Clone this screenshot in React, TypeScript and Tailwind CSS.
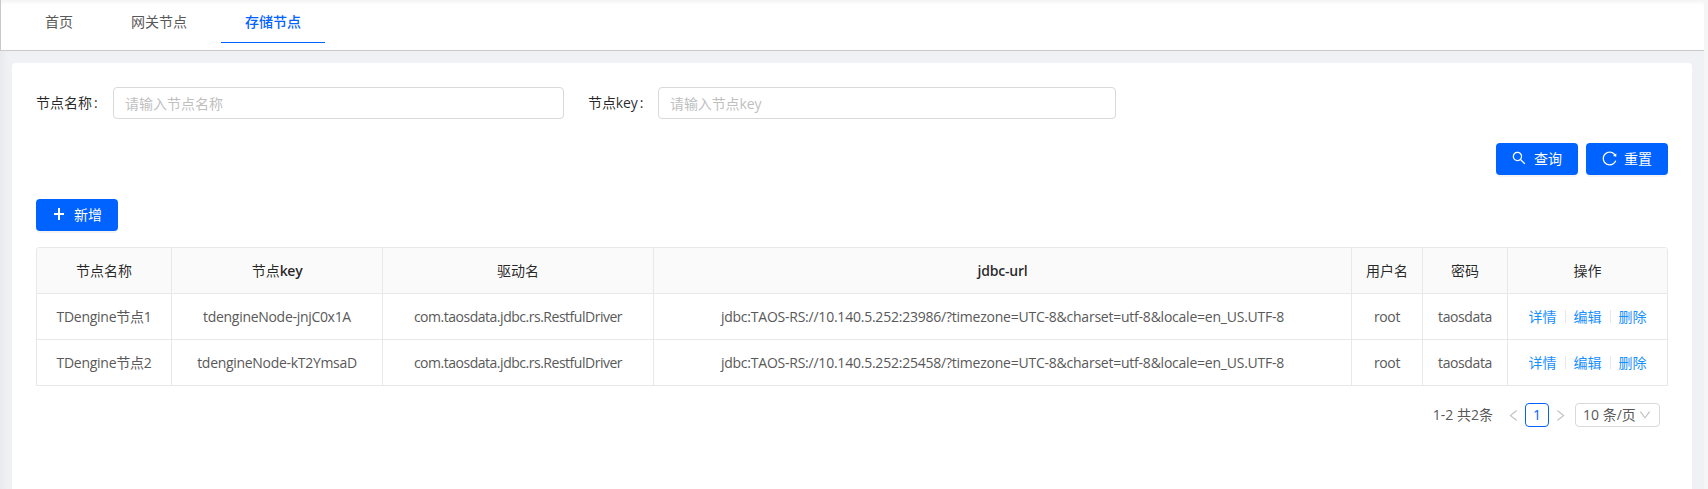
import type { ReactNode } from "react";
import {
  AiOutlineDown,
  AiOutlineLeft,
  AiOutlineReload,
  AiOutlineRight,
  AiOutlineSearch,
} from "react-icons/ai";

const tabs = ["首页", "网关节点", "存储节点"];
const activeTab = "存储节点";

const rows = [
  {
    name: "TDengine节点1",
    key: "tdengineNode-jnjC0x1A",
    driver: "com.taosdata.jdbc.rs.RestfulDriver",
    url: "jdbc:TAOS-RS://10.140.5.252:23986/?timezone=UTC-8&charset=utf-8&locale=en_US.UTF-8",
    user: "root",
    password: "taosdata",
  },
  {
    name: "TDengine节点2",
    key: "tdengineNode-kT2YmsaD",
    driver: "com.taosdata.jdbc.rs.RestfulDriver",
    url: "jdbc:TAOS-RS://10.140.5.252:25458/?timezone=UTC-8&charset=utf-8&locale=en_US.UTF-8",
    user: "root",
    password: "taosdata",
  },
];

function PlusIcon() {
  return (
    <svg width="14" height="14" viewBox="0 0 14 14" fill="currentColor" shapeRendering="crispEdges">
      <path d="M6 1h2v12H6z" />
      <path d="M2 6h10v2H2z" />
    </svg>
  );
}

function PrimaryButton({ icon, children }: { icon: ReactNode; children: ReactNode }) {
  return (
    <button className="flex h-8 w-[82px] items-center gap-[7px] rounded bg-[#0062ff] pl-[15px] text-white shadow-[0_2px_0_rgba(0,0,0,0.045)]">
      <span className="flex h-4 w-4 -translate-y-px items-center justify-center">{icon}</span>
      <span>{children}</span>
    </button>
  );
}

function Th({ children }: { children: ReactNode }) {
  return (
    <th className="border-r border-b border-[#e8e8e8] p-0 text-center font-normal text-black/85">{children}</th>
  );
}

function Td({ className = "", children }: { className?: string; children: ReactNode }) {
  return <td className={`border-r border-b border-[#e8e8e8] p-0 text-center ${className}`}>{children}</td>;
}

function Actions() {
  return (
    <div className="flex items-center justify-center text-[#1890ff]">
      <a>详情</a>
      <span className="mx-2 h-[13px] w-px bg-[#e8e8e8]" />
      <a>编辑</a>
      <span className="mx-2 h-[13px] w-px bg-[#e8e8e8]" />
      <a>删除</a>
    </div>
  );
}

export default function App() {
  return (
    <div className="flex h-[489px] w-[1708px] overflow-hidden bg-[#f5f5f5] font-['Open_Sans','Noto_Sans_CJK_SC',sans-serif] text-sm leading-[22px] text-[#595959]">
      <div className="flex w-[1704px] flex-col bg-[#f0f1f5]">
        <nav className="flex h-[51px] shrink-0 gap-[10px] border-b border-l border-[#c9c9c9] bg-white pl-5 shadow-[inset_0_4px_4px_-2px_rgba(0,21,41,0.06)]">
          {tabs.map((tab) => (
            <a
              key={tab}
              className={
                tab === activeTab
                  ? "h-[43px] border-b border-[#0062ff] px-6 pt-[11px] font-medium text-[#0062ff]"
                  : "h-[43px] px-6 pt-[11px]"
              }
            >
              {tab}
            </a>
          ))}
        </nav>
        <div className="flex grow bg-linear-to-r from-[#e8eaee] to-[#f0f1f5] to-[8px] pt-3 pr-3 pl-3">
          <main className="flex w-[1680px] flex-col rounded-t-sm bg-white px-6 pt-6">
            <div className="flex h-8 items-center text-black/85">
              <label className="w-[77px]">
                节点名称<span className="ml-0.5">:</span>
              </label>
              <input
                className="h-8 w-[451px] rounded border border-[#d9d9d9] px-[11px] placeholder:text-[#bfbfbf]"
                placeholder="请输入节点名称"
              />
              <label className="ml-6 w-[70px] tracking-[-0.1px]">
                节点key<span className="ml-0.5">:</span>
              </label>
              <input
                className="h-8 w-[458px] rounded border border-[#d9d9d9] px-[11px] tracking-[-0.1px] placeholder:text-[#bfbfbf]"
                placeholder="请输入节点key"
              />
            </div>
            <div className="mt-6 flex justify-end gap-2">
              <PrimaryButton icon={<AiOutlineSearch size={16} className="shrink-0" />}>查询</PrimaryButton>
              <PrimaryButton icon={<AiOutlineReload size={17} className="shrink-0" />}>重置</PrimaryButton>
            </div>
            <div className="mt-6">
              <PrimaryButton icon={<PlusIcon />}>新增</PrimaryButton>
            </div>
            <table className="mt-4 w-[1632px] table-fixed border-separate border-spacing-0 overflow-hidden rounded-t border-t border-l border-[#e8e8e8]">
              <colgroup>
                <col className="w-[135px]" />
                <col className="w-[211px]" />
                <col className="w-[271px]" />
                <col className="w-[698px]" />
                <col className="w-[71px]" />
                <col className="w-[85px]" />
                <col className="w-[160px]" />
              </colgroup>
              <thead>
                <tr className="h-[46px] bg-[#fafafa]">
                  <Th>节点名称</Th>
                  <Th>
                    节点<span className="font-semibold tracking-[-0.3px]">key</span>
                  </Th>
                  <Th>驱动名</Th>
                  <Th>
                    <span className="font-semibold tracking-[-0.2px]">jdbc-url</span>
                  </Th>
                  <Th>用户名</Th>
                  <Th>密码</Th>
                  <Th>操作</Th>
                </tr>
              </thead>
              <tbody>
                {rows.map((r) => (
                  <tr key={r.key} className="h-[46px]">
                    <Td className="tracking-[-0.27px]">{r.name}</Td>
                    <Td className="tracking-[-0.3px]">{r.key}</Td>
                    <Td className="tracking-[-0.48px]">{r.driver}</Td>
                    <Td className="tracking-[-0.23px]">{r.url}</Td>
                    <Td className="tracking-[-0.4px]">{r.user}</Td>
                    <Td className="tracking-[-0.4px]">{r.password}</Td>
                    <Td>
                      <Actions />
                    </Td>
                  </tr>
                ))}
              </tbody>
            </table>
            <div className="mt-[17px] flex h-6 items-center justify-end pr-2">
              <span>1-2 共2条</span>
              <span className="ml-2 flex w-6 justify-center text-[#bfbfbf]">
                <AiOutlineLeft size={15} />
              </span>
              <span className="flex h-6 w-6 items-center justify-center rounded border border-[#0062ff] text-[#0062ff]">
                1
              </span>
              <span className="flex w-[26px] justify-center pr-[3px] text-[#bfbfbf]">
                <AiOutlineRight size={15} />
              </span>
              <span className="flex h-6 w-[85px] items-center justify-between rounded border border-[#d9d9d9] pr-[7px] pl-[7px]">
                <span>10 条/页</span>
                <AiOutlineDown size={14} className="text-[#bfbfbf]" />
              </span>
            </div>
          </main>
        </div>
      </div>
    </div>
  );
}
